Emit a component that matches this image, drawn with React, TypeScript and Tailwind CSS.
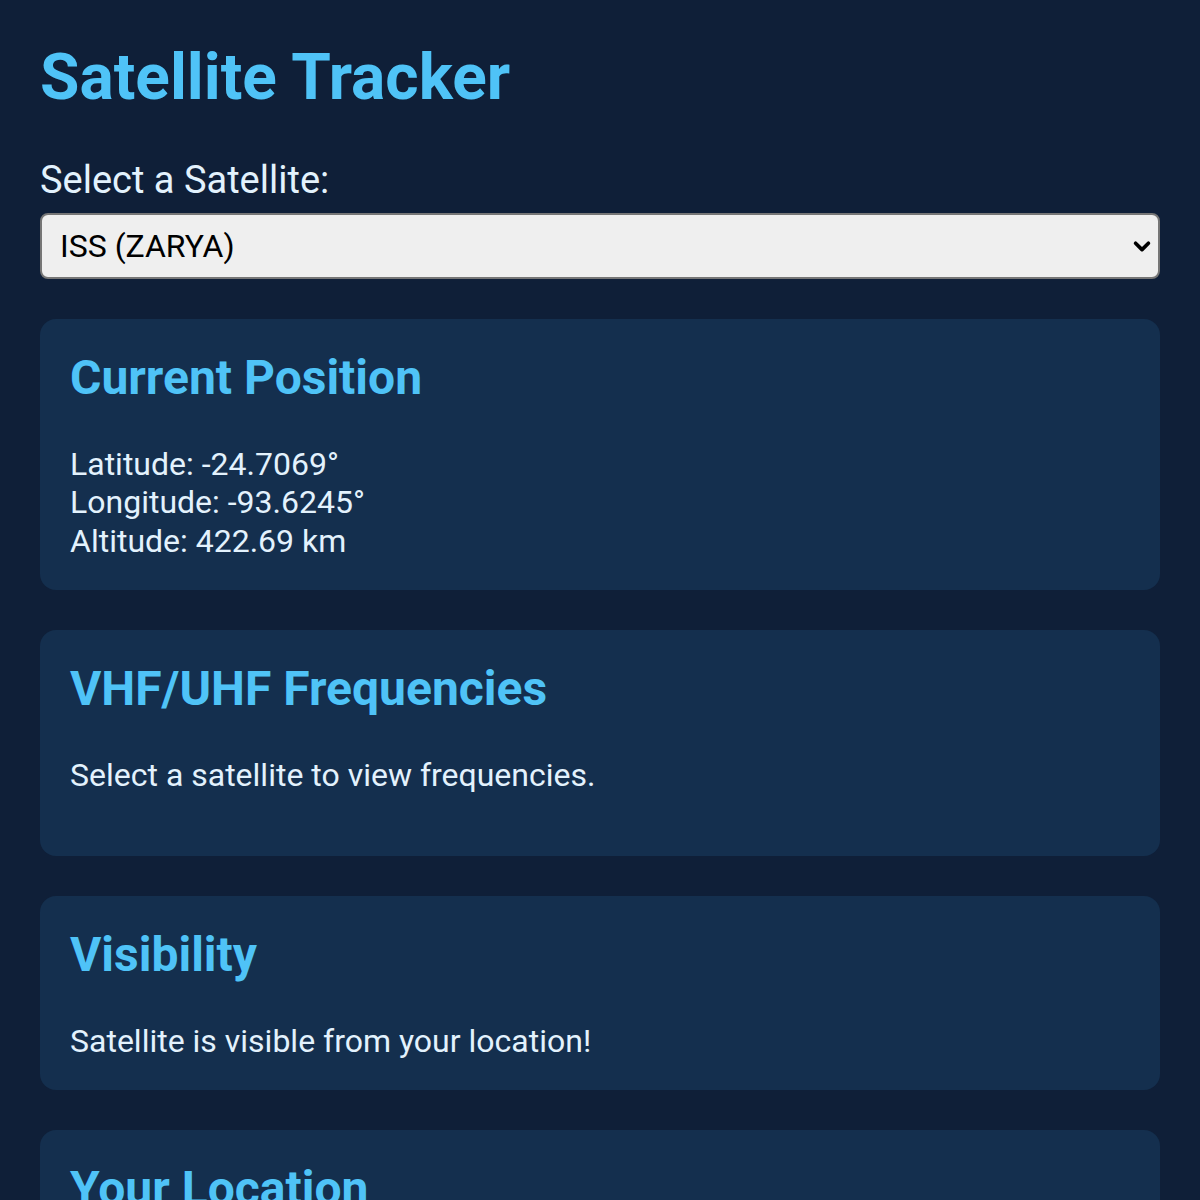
import { useState } from "react";

const Card = ({ title, children, className = "" }: { title: string; children: React.ReactNode; className?: string }) => (
  <div className={`bg-[#142f4e] rounded-2xl p-[30px] ${className}`}>
    <h2 className="text-[48px] leading-[1.2] font-bold text-[#4fc3f7] mb-[38px]">{title}</h2>
    {children}
  </div>
);

export default function App() {
  const [sat, setSat] = useState("ISS (ZARYA)");

  return (
    <div
      className="min-h-screen bg-[#0f1f38] px-10 pt-10 pb-10 text-[#e3f2fd]"
      style={{ fontFamily: "Roboto, 'Liberation Sans', sans-serif" }}
    >
      <h1 className="text-[64px] leading-[1.2] font-bold text-[#4fc3f7]">Satellite Tracker</h1>
      <label className="block mt-[41px] text-[38px] leading-[1.2] text-[#e3f2fd]">Select a Satellite:</label>
      <div className="relative mt-[10px]">
        <select
          value={sat}
          onChange={(e) => setSat(e.target.value)}
          className="w-full h-[66px] appearance-none rounded-lg border-2 border-[#767676] bg-[#efefef] pl-[18px] text-[32px] text-black"
        >
          <option>ISS (ZARYA)</option>
          <option>NOAA 19</option>
          <option>SO-50</option>
        </select>
        <svg className="absolute right-[7px] top-1/2 -translate-y-1/2 pointer-events-none" width="22" height="22" viewBox="0 0 24 24" fill="none" stroke="black" strokeWidth="4" strokeLinecap="round" strokeLinejoin="round">
          <path d="M5 9l7 7 7-7" />
        </svg>
      </div>

      <div className="flex flex-col gap-10 mt-10">
        <Card title="Current Position">
          <div className="text-[32px] leading-[1.2]">
            <div>Latitude: -24.7069°</div>
            <div>Longitude: -93.6245°</div>
            <div>Altitude: 422.69 km</div>
          </div>
        </Card>
        <Card title="VHF/UHF Frequencies">
          <p className="text-[32px] leading-[1.2] mb-8">Select a satellite to view frequencies.</p>
        </Card>
        <Card title="Visibility">
          <p className="text-[32px] leading-[1.2]">Satellite is visible from your location!</p>
        </Card>
        <Card title="Your Location">
          <p className="text-[32px] leading-[1.2]">Latitude: 40.7128°</p>
        </Card>
      </div>
    </div>
  );
}
